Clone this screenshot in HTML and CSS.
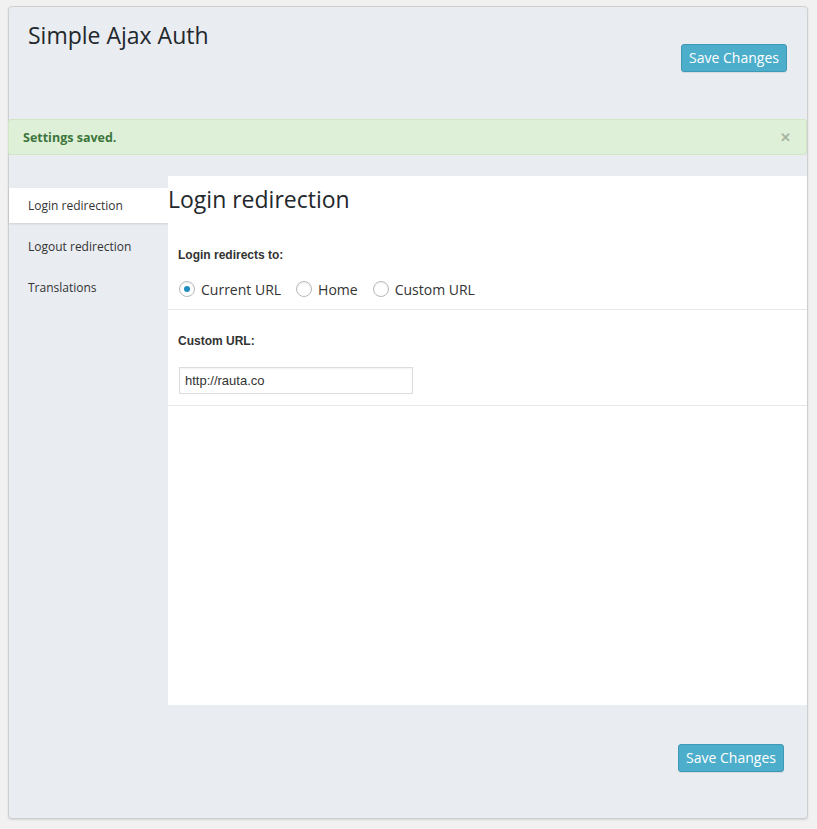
FILE: index.html
```html
<!DOCTYPE html>
<html>
<head>
<meta charset="utf-8">
<link rel="stylesheet" href="styles.css">
</head>
<body>
<div class="panel">
  <div class="header">
    <h1 class="title">Simple Ajax Auth</h1>
    <button class="btn btn-top">Save Changes</button>
  </div>
  <div class="notice">
    <span class="notice-text">Settings saved.</span>
    <span class="notice-close">&#x2715;</span>
  </div>
  <div class="body">
    <ul class="tabs">
      <li class="tab active">Login redirection</li>
      <li class="tab">Logout redirection</li>
      <li class="tab">Translations</li>
    </ul>
    <div class="content">
      <h2 class="section-title">Login redirection</h2>
      <div class="field field-first">
        <div class="label">Login redirects to:</div>
        <div class="radios">
          <label class="radio"><span class="circle checked"></span>Current URL</label>
          <label class="radio"><span class="circle"></span>Home</label>
          <label class="radio"><span class="circle"></span>Custom URL</label>
        </div>
      </div>
      <div class="field field-second">
        <div class="label">Custom URL:</div>
        <div class="input">http://rauta.co</div>
      </div>
    </div>
  </div>
  <div class="footer">
    <button class="btn">Save Changes</button>
  </div>
</div>
</body>
</html>
```
FILE: styles.css
```css
html, body {
  margin: 0;
  padding: 0;
  background: #f1f1f1;
}
body {
  padding: 6px 9px 10px 8px;
  font-family: "Open Sans", "Noto Sans", sans-serif;
  color: #333;
}
.panel {
  width: 800px;
  height: 813px;
  box-sizing: border-box;
  background: #e9ecf1;
  border: 1px solid #cfcfcf;
  border-radius: 4px;
  box-shadow: 0 1px 2px rgba(0,0,0,0.12);
  display: flex;
  flex-direction: column;
}
.header {
  display: flex;
  justify-content: space-between;
  align-items: flex-start;
  padding: 12px 20px 0 19px;
  height: 100px;
}
.title {
  margin: 0;
  font-size: 23px;
  line-height: 32px;
  font-weight: 400;
  color: #23282d;
}
.btn {
  font-family: "Open Sans", "Noto Sans", sans-serif;
  font-size: 14px;
  color: #fff;
  background: #4caecb;
  border: 1px solid #3e99b4;
  border-radius: 3px;
  height: 28px;
  width: 106px;
  padding: 0;
  line-height: 26px;
  box-shadow: 0 1px 0 rgba(0,0,0,0.08);
}
.btn-top {
  margin-top: 25px;
}
.notice {
  margin: 0 0 0 -1px;
  height: 36px;
  box-sizing: border-box;
  background: #dff0d8;
  border: 1px solid #d2e6c6;
  border-radius: 3px;
  display: flex;
  align-items: center;
  justify-content: space-between;
  padding: 0 15px 0 14px;
}
.notice-text {
  font-size: 12.5px;
  font-weight: 700;
  color: #3c763d;
}
.notice-close {
  font-size: 13px;
  font-weight: 700;
  color: #a6b5a2;
}
.body {
  display: flex;
  margin-top: 21px;
  height: 529px;
}
.tabs {
  list-style: none;
  margin: 0;
  padding: 12px 0 0 0;
  width: 159px;
}
.tab {
  height: 35px;
  line-height: 35px;
  margin-bottom: 6px;
  padding-left: 19px;
  font-size: 12px;
  color: #333;
}
.tab.active {
  background: #fff;
  box-shadow: 0 1px 2px rgba(0,0,0,0.12);
}
.content {
  flex: 1;
  background: #fff;
  padding-top: 7px;
}
.section-title {
  margin: 0;
  font-size: 23px;
  line-height: 32px;
  font-weight: 400;
  color: #23282d;
}
.field {
  padding: 0 10px;
  border-bottom: 1px solid #e8e8e8;
}
.field-first {
  padding-top: 32px;
  padding-bottom: 10px;
}
.field-second {
  padding-top: 23px;
  padding-bottom: 11px;
}
.label {
  font-family: "Liberation Sans", Arial, sans-serif;
  font-weight: 700;
  font-size: 12px;
  line-height: 16px;
  color: #333;
}
.radios {
  display: flex;
  margin-top: 16px;
  height: 20px;
  align-items: center;
}
.radio {
  display: flex;
  align-items: center;
  font-size: 14px;
  color: #333;
  margin-right: 14px;
}
.circle {
  width: 16px;
  height: 16px;
  box-sizing: border-box;
  border: 1px solid #b4b9be;
  border-radius: 50%;
  background: #fff;
  box-shadow: inset 0 1px 2px rgba(0,0,0,0.07);
  margin: 0 6px 0 1px;
  display: flex;
  align-items: center;
  justify-content: center;
}
.circle.checked::after {
  content: "";
  width: 6px;
  height: 6px;
  border-radius: 50%;
  background: #1e8cbe;
}
.input {
  margin: 18px 0 0 1px;
  width: 234px;
  height: 27px;
  box-sizing: border-box;
  border: 1px solid #ddd;
  box-shadow: inset 0 1px 2px rgba(0,0,0,0.05);
  font-family: "Liberation Sans", Arial, sans-serif;
  font-size: 13px;
  line-height: 25px;
  padding-left: 5px;
  color: #333;
}
.footer {
  display: flex;
  justify-content: flex-end;
  padding: 39px 23px 0 0;
}
```
